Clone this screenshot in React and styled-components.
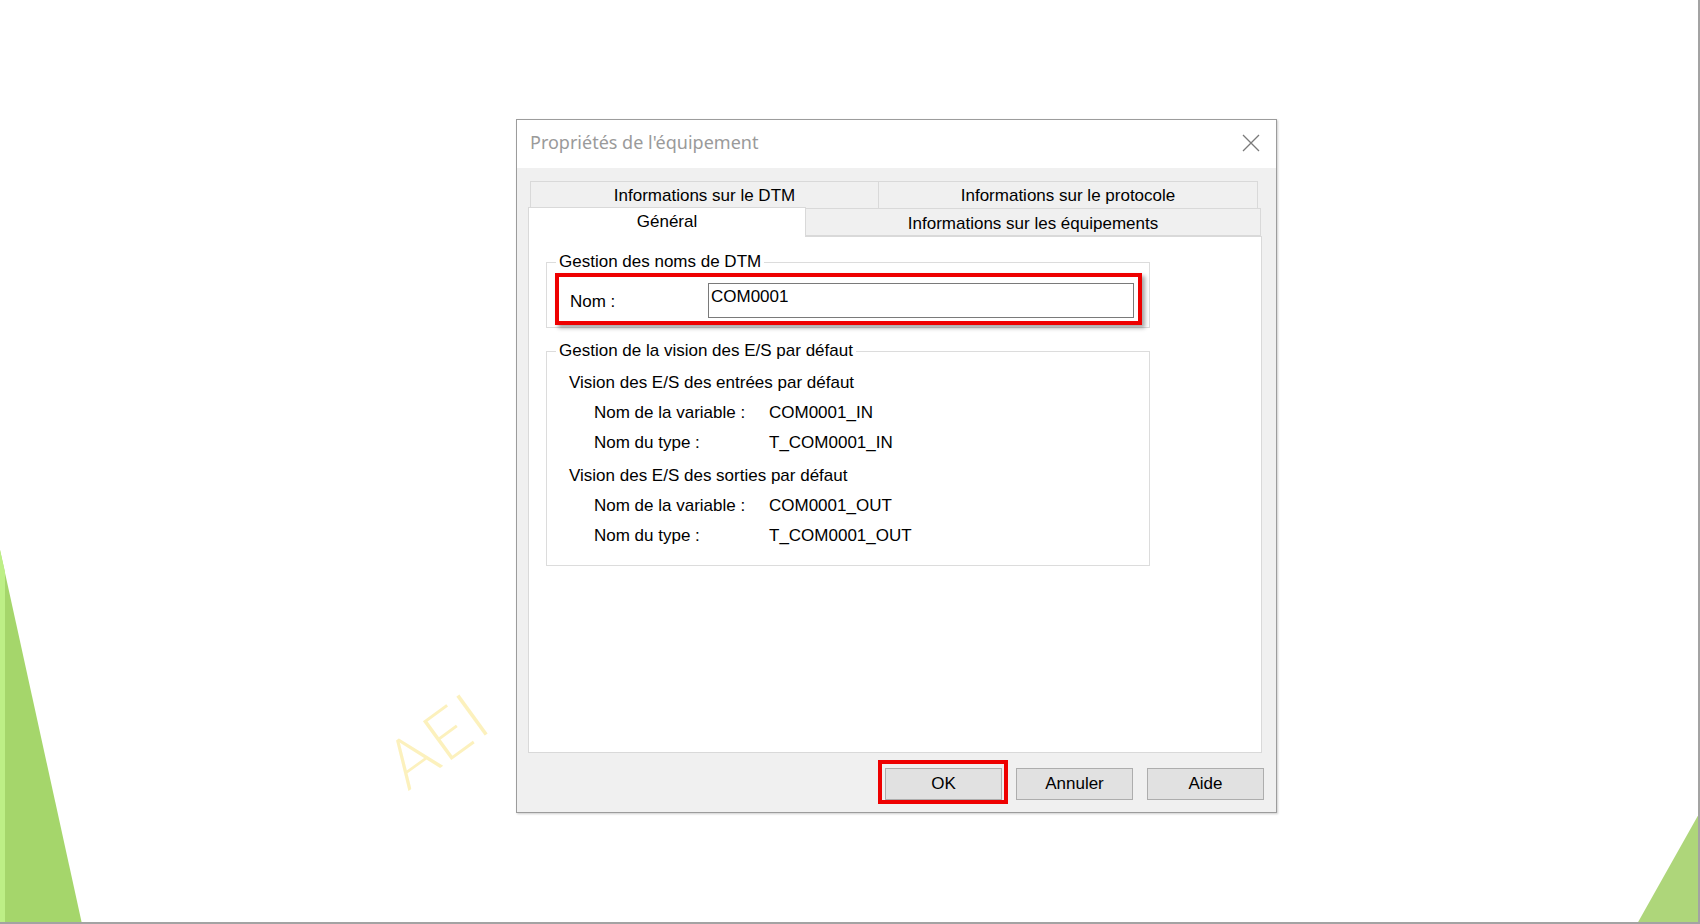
import React from "react";
import styled, { createGlobalStyle } from "styled-components";

const GlobalStyle = createGlobalStyle`
  html, body {
    margin: 0;
    padding: 0;
    background: #fff;
  }
`;

const entrees = [
  { label: "Nom de la variable :", value: "COM0001_IN" },
  { label: "Nom du type :", value: "T_COM0001_IN" },
];

const sorties = [
  { label: "Nom de la variable :", value: "COM0001_OUT" },
  { label: "Nom du type :", value: "T_COM0001_OUT" },
];

export default function App() {
  return (
    <>
      <GlobalStyle />
      <Stage>
        <Backdrop width="1700" height="924" viewBox="0 0 1700 924">
          <polygon points="0,550 82,924 0,924" fill="#a5d66b" />
          <polygon points="0,550 5,572 5,924 0,924" fill="#bdef86" />
          <polygon points="1700,812 1637,924 1700,924" fill="#aed67a" />
        </Backdrop>
        <Watermark>AEI</Watermark>

        <Dialog>
          <TitleBar>
            <Title>Propriétés de l'équipement</Title>
            <CloseIcon width="18" height="18" viewBox="0 0 18 18">
              <path d="M1 1 L17 17 M17 1 L1 17" stroke="#7a7a7a" strokeWidth="1.3" />
            </CloseIcon>
          </TitleBar>

          <Body>
            <TabRow $offset={2}>
              <Tab $w={349}>Informations sur le DTM</Tab>
              <Tab $w={380}>Informations sur le protocole</Tab>
            </TabRow>
            <TabRow $offset={0}>
              <Tab $w={278} $active>Général</Tab>
              <Tab $w={456} $low>Informations sur les équipements</Tab>
            </TabRow>

            <Panel>
              <Group $mt={0}>
                <Legend>Gestion des noms de DTM</Legend>
                <Highlight>
                  <NameLabel>Nom :</NameLabel>
                  <NameInput>COM0001</NameInput>
                </Highlight>
              </Group>

              <Group $mt={13}>
                <Legend>Gestion de la vision des E/S par défaut</Legend>
                <Vision>
                  <Heading>Vision des E/S des entrées par défaut</Heading>
                  {entrees.map((r) => (
                    <InfoRow key={r.label}>
                      <InfoLabel>{r.label}</InfoLabel>
                      <span>{r.value}</span>
                    </InfoRow>
                  ))}
                  <Heading $mt={3}>Vision des E/S des sorties par défaut</Heading>
                  {sorties.map((r) => (
                    <InfoRow key={r.label + "o"}>
                      <InfoLabel>{r.label}</InfoLabel>
                      <span>{r.value}</span>
                    </InfoRow>
                  ))}
                </Vision>
              </Group>
            </Panel>

            <Buttons>
              <RedFrame>
                <Button>OK</Button>
              </RedFrame>
              <Button $ml={8}>Annuler</Button>
              <Button $ml={14}>Aide</Button>
            </Buttons>
          </Body>
        </Dialog>
      </Stage>
    </>
  );
}

const Stage = styled.div`
  position: relative;
  width: 1700px;
  height: 924px;
  box-sizing: border-box;
  overflow: hidden;
  background: #fff;
  border-right: 2px solid #a3a3a3;
  border-bottom: 2px solid #a3a3a3;
  padding: 119px 0 0 516px;
  font-family: "Liberation Sans", Arial, sans-serif;
  font-size: 17px;
  color: #000;
`;

const Backdrop = styled.svg`
  position: absolute;
  left: 0;
  top: 0;
`;

const Watermark = styled.span`
  position: absolute;
  left: 382px;
  top: 698px;
  font-family: Lato, "Liberation Sans", sans-serif;
  font-weight: 300;
  font-size: 68px;
  letter-spacing: 2px;
  color: #fcf1bd;
  transform: rotate(-36deg);
`;

const Dialog = styled.div`
  position: relative;
  width: 761px;
  height: 694px;
  box-sizing: border-box;
  border: 1px solid #9c9c9c;
  box-shadow: 1px 1px 2px rgba(0, 0, 0, 0.2);
  background: #f0f0f0;
  display: flex;
  flex-direction: column;
`;

const TitleBar = styled.div`
  height: 48px;
  flex-shrink: 0;
  background: #fff;
  display: flex;
  align-items: center;
  justify-content: space-between;
  padding: 0 16px 0 13px;
`;

const Title = styled.span`
  font-family: "Noto Sans", "Open Sans", sans-serif;
  font-size: 18px;
  color: #9a9a9a;
  margin-top: -4px;
`;

const CloseIcon = styled.svg`
  display: block;
  margin-top: -3px;
`;

const Body = styled.div`
  flex: 1;
  display: flex;
  flex-direction: column;
  padding: 13px 13px 0 11px;
`;

const TabRow = styled.div`
  display: flex;
  margin-left: ${(p) => p.$offset}px;
  height: ${(p) => (p.$offset ? 27 : 28)}px;
`;

const Tab = styled.div`
  position: relative;
  z-index: ${(p) => (p.$active ? 2 : 0)};
  box-sizing: border-box;
  width: ${(p) => p.$w}px;
  height: ${(p) => (p.$active ? 30 : 28)}px;
  margin-top: ${(p) => (p.$active ? -1 : 0)}px;
  background: ${(p) => (p.$active ? "#fff" : "#f0f0f0")};
  border: 1px solid #d9d9d9;
  border-bottom: ${(p) => (p.$active ? "none" : "1px solid #d9d9d9")};
  margin-left: -1px;
  &:first-child {
    margin-left: 0;
  }
  display: flex;
  justify-content: center;
  align-items: center;
  padding-top: ${(p) => (p.$low ? 3 : 2)}px;
  padding-bottom: ${(p) => (p.$active ? 4 : 0)}px;
  white-space: nowrap;
`;

const Panel = styled.div`
  box-sizing: border-box;
  width: 734px;
  height: 517px;
  background: #fff;
  border: 1px solid #d9d9d9;
  padding: 15px 0 0 17px;
`;

const Group = styled.fieldset`
  box-sizing: border-box;
  width: 604px;
  margin: ${(p) => p.$mt}px 0 0 0;
  padding: 0 7px 2px 8px;
  border: 1px solid #dcdcdc;
  min-width: 0;
`;

const Legend = styled.legend`
  margin-left: 1px;
  padding: 0 3px;
  line-height: 20px;
`;

const Highlight = styled.div`
  margin-top: 1px;
  height: 52px;
  box-sizing: border-box;
  border: 4px solid #ee0000;
  box-shadow: 3px 3px 4px rgba(0, 0, 0, 0.35);
  display: flex;
  align-items: flex-start;
  padding: 6px 4px 3px 11px;
`;

const NameLabel = styled.span`
  width: 138px;
  margin-top: 9px;
`;

const NameInput = styled.div`
  flex: 1;
  height: 35px;
  box-sizing: border-box;
  border: 1px solid #7a7a7a;
  background: #fff;
  padding: 3px 2px 0;
  line-height: 20px;
`;

const Vision = styled.div`
  padding: 7px 0 12px 14px;
`;

const Heading = styled.div`
  height: 30px;
  line-height: 30px;
  margin-top: ${(p) => p.$mt || 0}px;
`;

const InfoRow = styled.div`
  display: flex;
  height: 30px;
  line-height: 30px;
  padding-left: 25px;
`;

const InfoLabel = styled.span`
  width: 175px;
`;

const Buttons = styled.div`
  display: flex;
  justify-content: flex-end;
  align-items: flex-start;
  margin-top: 7px;
  margin-right: -1px;
`;

const RedFrame = styled.div`
  border: 4px solid #ee0000;
  padding: 4px 2px 0 3px;
`;

const Button = styled.button`
  width: 117px;
  height: 32px;
  margin: ${(p) => (p.$ml ? "8px 0 0 " + p.$ml + "px" : 0)};
  background: #e1e1e1;
  border: 1px solid #adadad;
  font-family: "Liberation Sans", Arial, sans-serif;
  font-size: 17px;
  color: #000;
  padding: 0;
`;
